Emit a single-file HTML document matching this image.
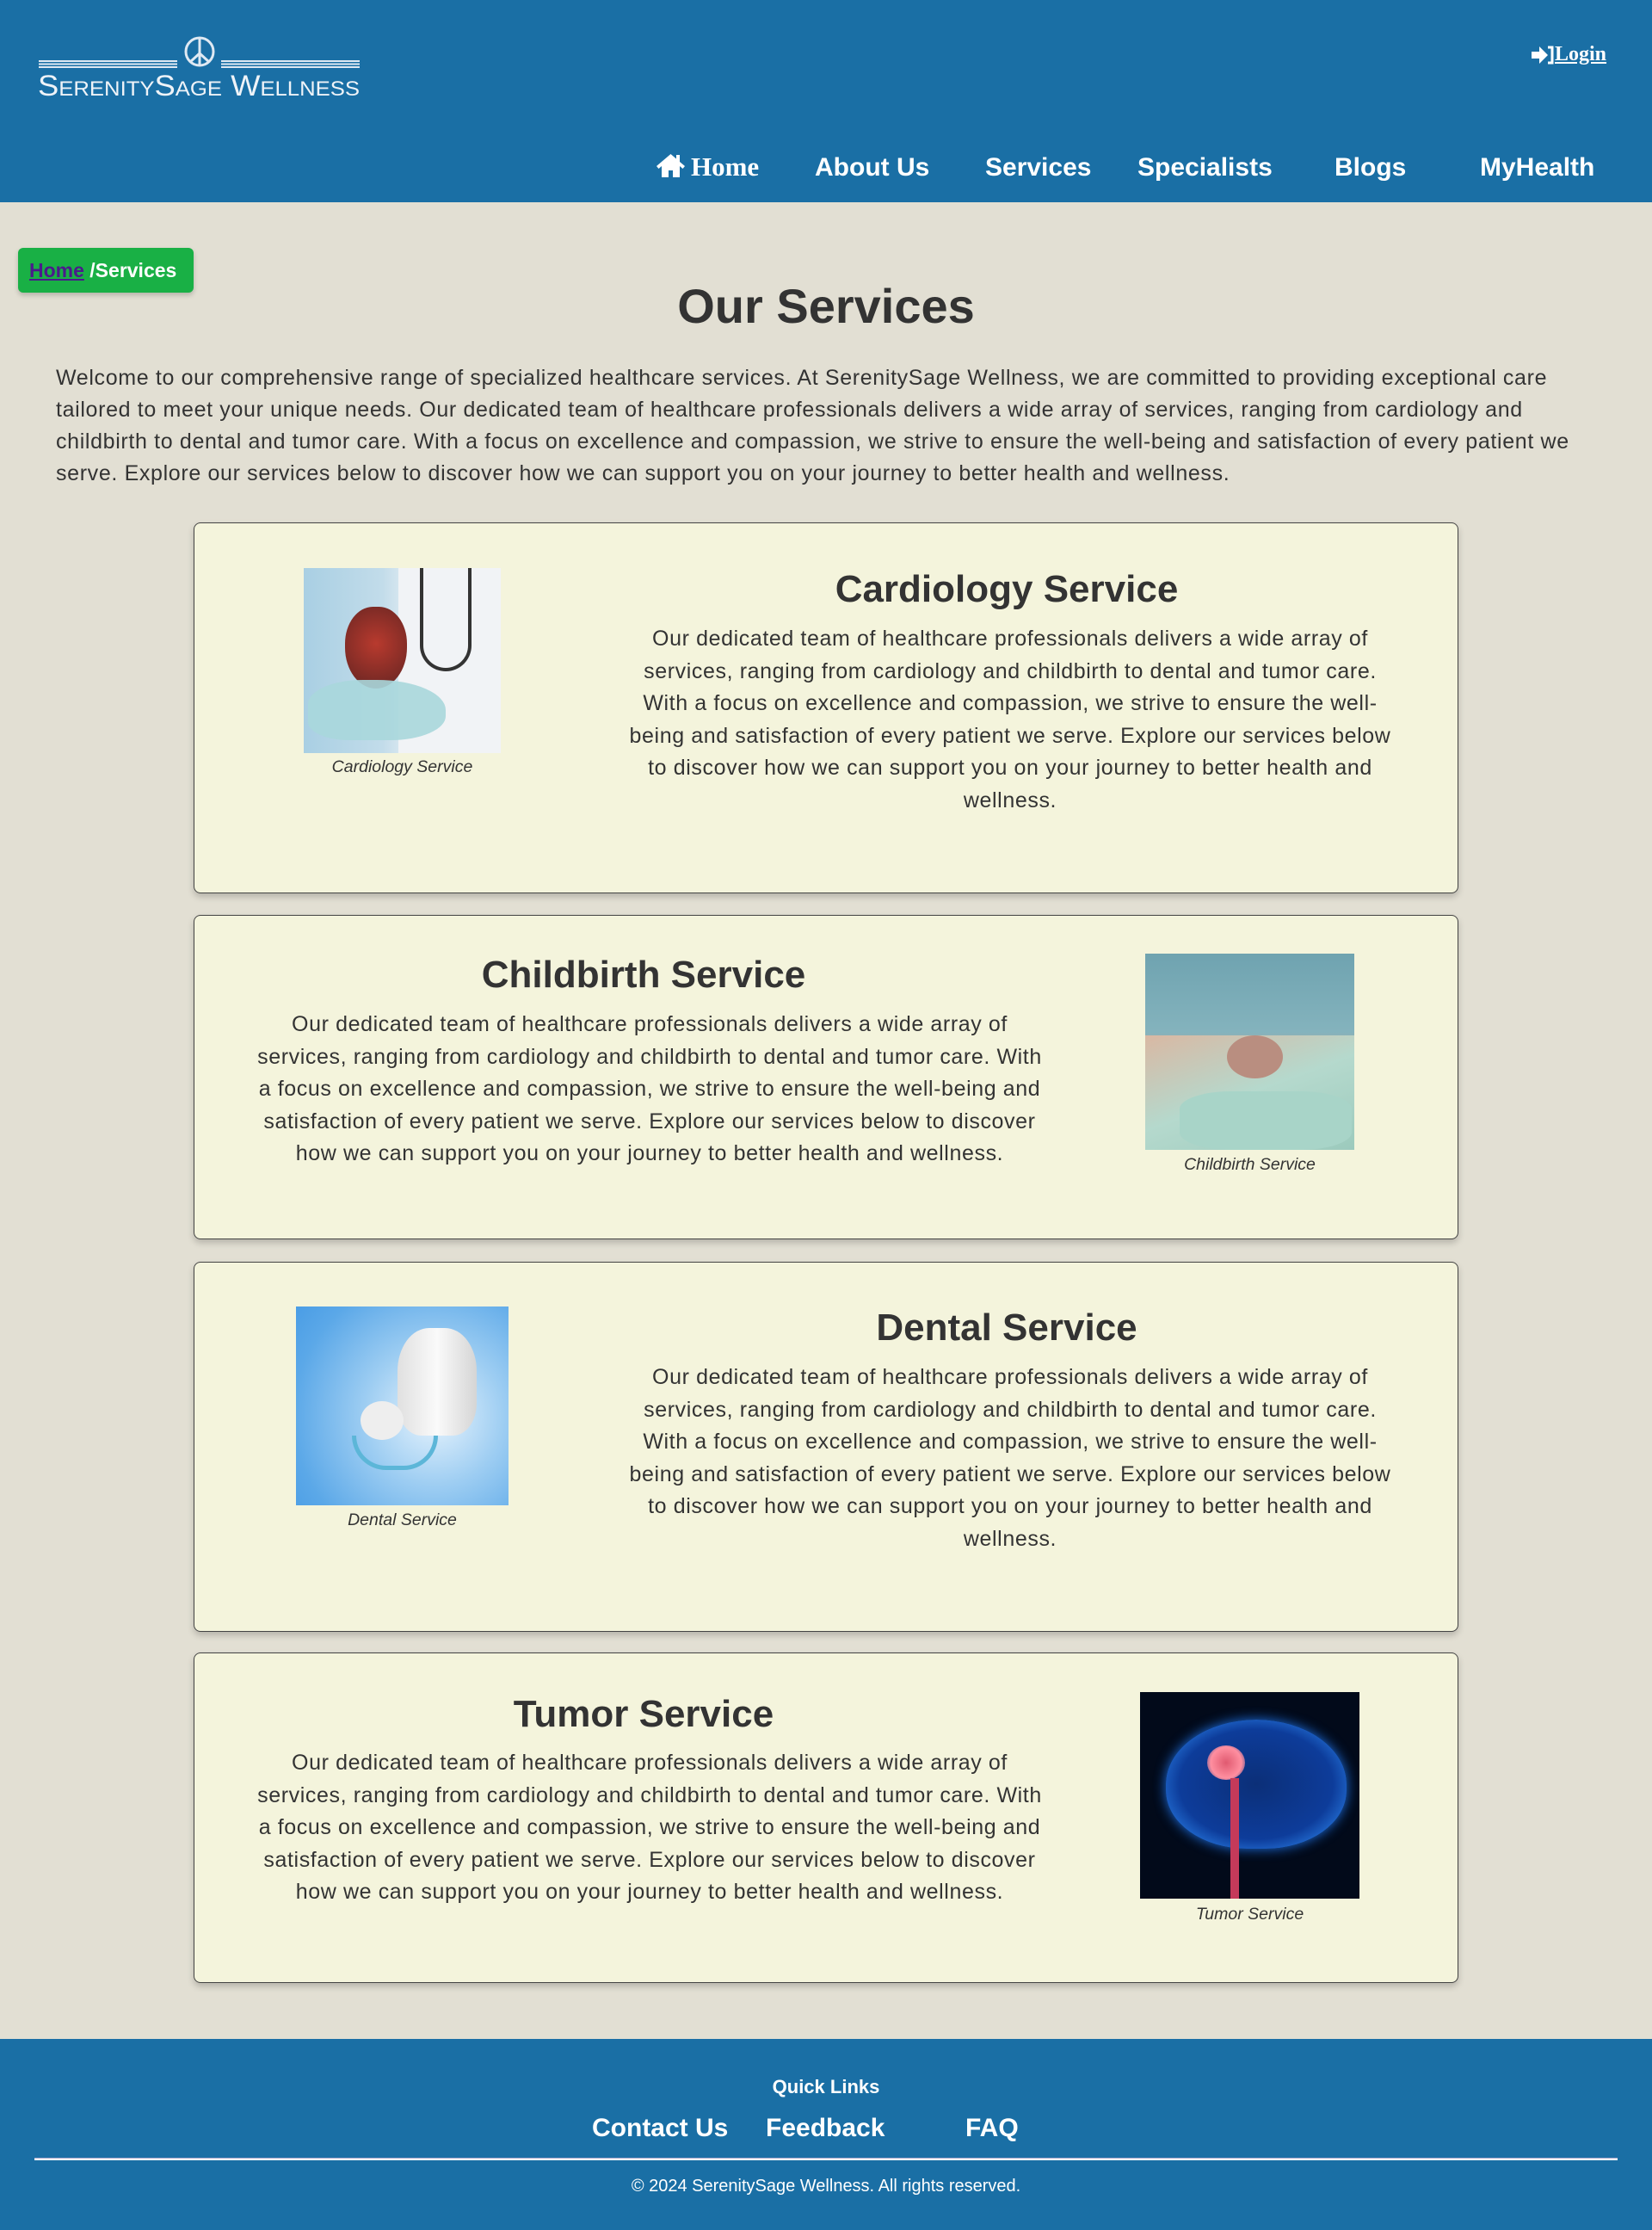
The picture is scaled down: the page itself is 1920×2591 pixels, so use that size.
<!DOCTYPE html>
<html><head><meta charset="utf-8"><style>
*{margin:0;padding:0;box-sizing:border-box}
body{width:1920px;height:2591px;background:#e2dfd3;font-family:"Liberation Sans",sans-serif;color:#333;position:relative;overflow:hidden}
.abs{position:absolute}
header{position:absolute;left:0;top:0;width:1920px;height:235px;background:#1a6fa5}
.nav{position:absolute;top:178px;color:#fff;font-weight:bold;font-size:30px;white-space:nowrap}
.card{position:absolute;left:225px;width:1470px;background:#f4f4dc;border:1.5px solid #444;border-radius:8px;box-shadow:0 4px 8px rgba(0,0,0,.2)}
.t{position:absolute;text-align:center;font-size:25px;line-height:37.5px;letter-spacing:.6px}
.h{position:absolute;text-align:center;font-size:44px;font-weight:bold;white-space:nowrap}
.cap{position:absolute;text-align:center;font-size:19.5px;font-style:italic;white-space:nowrap}
.img{position:absolute;overflow:hidden}
.fl{position:absolute;top:2456px;color:#fff;font-weight:bold;font-size:30px}
</style></head><body>
<header>
<svg class="abs" style="left:43px;top:40px" width="380" height="75" viewBox="0 0 380 75">
<g stroke="#dfe9f3" fill="none" stroke-width="2">
<line x1="2" y1="31" x2="163" y2="31"/><line x1="2" y1="34.5" x2="163" y2="34.5"/><line x1="2" y1="38" x2="163" y2="38"/>
<line x1="214" y1="31" x2="375" y2="31"/><line x1="214" y1="34.5" x2="375" y2="34.5"/><line x1="214" y1="38" x2="375" y2="38"/>
<circle cx="189" cy="20" r="16" stroke-width="3"/><line x1="189" y1="4" x2="189" y2="36" stroke-width="3"/>
<line x1="189" y1="22" x2="178" y2="32" stroke-width="3"/><line x1="189" y1="22" x2="200" y2="32" stroke-width="3"/>
</g>
<text x="188" y="71" fill="#eef3f8" text-anchor="middle" font-family="Liberation Sans Narrow,Liberation Sans,sans-serif" font-size="34" textLength="374" lengthAdjust="spacingAndGlyphs" style="font-variant:small-caps">SerenitySage Wellness</text>
</svg>
<svg class="abs" style="left:1780px;top:52px" width="28" height="24" viewBox="0 0 28 24"><path d="M0 8h9V2l10 10-10 10v-6H0z" fill="#fff"/><path d="M19 3h5v18h-5" stroke="#fff" stroke-width="3" fill="none"/></svg>
<div class="abs" style="left:1807px;top:50px;color:#fff;font-family:'Liberation Serif',serif;font-weight:bold;font-size:24px;text-decoration:underline">Login</div>
<svg class="abs" style="left:762px;top:178px" width="35" height="28" viewBox="0 0 35 28"><path d="M17.5 1L1 15l2.5 3 3.5-3v13h8v-8h5v8h8V15l3.5 3L34 15l-6-5V2h-4v4.5z" fill="#fff"/></svg>
<div class="nav" style="left:803px;top:176px;font-family:'Liberation Serif',serif;font-size:31px">Home</div>
<div class="nav" style="left:947px">About Us</div>
<div class="nav" style="left:1145px">Services</div>
<div class="nav" style="left:1322px">Specialists</div>
<div class="nav" style="left:1551px">Blogs</div>
<div class="nav" style="left:1720px">MyHealth</div>
</header>

<div class="abs" style="left:21px;top:288px;width:204px;height:52px;background:#19b045;border-radius:6px;box-shadow:0 3px 6px rgba(0,0,0,.2)"></div>
<div class="abs" style="left:34px;top:301px;font-size:23px;font-weight:bold;color:#fff;white-space:nowrap"><span style="color:#4b1a8c;text-decoration:underline">Home</span> /Services</div>

<div class="abs" style="left:0;width:1920px;top:323px;text-align:center;font-size:56px;font-weight:bold">Our Services</div>
<div class="abs" style="left:65px;top:421px;width:1795px;font-size:25px;line-height:37px;letter-spacing:.65px">Welcome to our comprehensive range of specialized healthcare services. At SerenitySage Wellness, we are committed to providing exceptional care tailored to meet your unique needs. Our dedicated team of healthcare professionals delivers a wide array of services, ranging from cardiology and childbirth to dental and tumor care. With a focus on excellence and compassion, we strive to ensure the well-being and satisfaction of every patient we serve. Explore our services below to discover how we can support you on your journey to better health and wellness.</div>

<!-- card 1 -->
<div class="card" style="top:607px;height:431px"></div>
<div class="img" style="left:353px;top:660px;width:229px;height:215px;background:linear-gradient(90deg,#a9cfe3 0%,#c2dcea 40%,#eef2f5 60%,#f7f8fa 100%)">
<div class="abs" style="left:110px;top:0;width:119px;height:215px;background:#f1f3f6"></div>
<div class="abs" style="left:135px;top:0;width:60px;height:120px;border:4px solid #333;border-top:none;border-radius:0 0 30px 30px"></div>
<div class="abs" style="left:48px;top:45px;width:72px;height:95px;background:radial-gradient(circle at 50% 45%,#b83a2e,#7a2a25 70%,#5a3535);border-radius:45% 45% 50% 50%"></div>
<div class="abs" style="left:5px;top:130px;width:160px;height:70px;background:#a9d7dc;border-radius:40% 50% 40% 30%;opacity:.9"></div>
</div>
<div class="cap" style="left:353px;width:229px;top:880px">Cardiology Service</div>
<div class="h" style="left:732px;width:876px;top:660px">Cardiology Service</div>
<div class="t" style="left:725px;width:898px;top:724px">Our dedicated team of healthcare professionals delivers a wide array of services, ranging from cardiology and childbirth to dental and tumor care. With a focus on excellence and compassion, we strive to ensure the well-being and satisfaction of every patient we serve. Explore our services below to discover how we can support you on your journey to better health and wellness.</div>

<!-- card 2 -->
<div class="card" style="top:1063px;height:377px"></div>
<div class="h" style="left:290px;width:916px;top:1108px">Childbirth Service</div>
<div class="t" style="left:290px;width:930px;top:1172px">Our dedicated team of healthcare professionals delivers a wide array of services, ranging from cardiology and childbirth to dental and tumor care. With a focus on excellence and compassion, we strive to ensure the well-being and satisfaction of every patient we serve. Explore our services below to discover how we can support you on your journey to better health and wellness.</div>
<div class="img" style="left:1331px;top:1108px;width:243px;height:228px;background:linear-gradient(180deg,#6fa3b0 0%,#84b3bd 40%,#c0a894 55%,#a5cfc4 70%,#9fcbbf 100%)">
<div class="abs" style="left:0;top:95px;width:243px;height:133px;background:linear-gradient(160deg,#d9b8a3,#b5d9cd 50%,#9ccabd)"></div>
<div class="abs" style="left:95px;top:95px;width:65px;height:50px;background:#b98e80;border-radius:50%"></div>
<div class="abs" style="left:40px;top:160px;width:200px;height:68px;background:#a8d4c8;border-radius:30%"></div>
</div>
<div class="cap" style="left:1331px;width:243px;top:1342px">Childbirth Service</div>

<!-- card 3 -->
<div class="card" style="top:1466px;height:430px"></div>
<div class="img" style="left:344px;top:1518px;width:247px;height:231px;background:radial-gradient(circle at 65% 55%,#e8f4fd 0%,#9dcdf2 40%,#5ba8e8 80%,#4a9de5 100%)">
<div class="abs" style="left:118px;top:25px;width:92px;height:125px;background:linear-gradient(90deg,#e0e0e0,#fafafa 50%,#d5d5d5);border-radius:40% 40% 30% 30%"></div>
<div class="abs" style="left:75px;top:110px;width:50px;height:45px;background:#eee;border-radius:50%"></div>
<div class="abs" style="left:65px;top:150px;width:100px;height:40px;border:5px solid #5cb6d8;border-top:none;border-radius:0 0 40px 40px"></div>
</div>
<div class="cap" style="left:344px;width:247px;top:1755px">Dental Service</div>
<div class="h" style="left:732px;width:876px;top:1518px">Dental Service</div>
<div class="t" style="left:725px;width:898px;top:1582px">Our dedicated team of healthcare professionals delivers a wide array of services, ranging from cardiology and childbirth to dental and tumor care. With a focus on excellence and compassion, we strive to ensure the well-being and satisfaction of every patient we serve. Explore our services below to discover how we can support you on your journey to better health and wellness.</div>

<!-- card 4 -->
<div class="card" style="top:1920px;height:384px"></div>
<div class="h" style="left:290px;width:916px;top:1967px">Tumor Service</div>
<div class="t" style="left:290px;width:930px;top:2030px">Our dedicated team of healthcare professionals delivers a wide array of services, ranging from cardiology and childbirth to dental and tumor care. With a focus on excellence and compassion, we strive to ensure the well-being and satisfaction of every patient we serve. Explore our services below to discover how we can support you on your journey to better health and wellness.</div>
<div class="img" style="left:1325px;top:1966px;width:255px;height:240px;background:#020a1a">
<div class="abs" style="left:30px;top:32px;width:210px;height:150px;border-radius:50% 50% 45% 45%;background:radial-gradient(ellipse at 50% 50%,#0c2f78 0%,#0d3c9a 60%,#2a7fe6 85%,#0a1c3c 100%);box-shadow:0 0 14px #1d6fe0"></div>
<div class="abs" style="left:78px;top:62px;width:44px;height:40px;border-radius:50%;background:radial-gradient(circle,#e05a70,#ff8fa0 60%,rgba(230,60,90,0) 100%)"></div>
<div class="abs" style="left:105px;top:100px;width:10px;height:140px;background:#c53a5a"></div>
</div>
<div class="cap" style="left:1325px;width:255px;top:2213px">Tumor Service</div>

<!-- footer -->
<div class="abs" style="left:0;top:2369px;width:1920px;height:222px;background:#1a6fa5"></div>
<div class="abs" style="left:0;width:1920px;top:2412px;text-align:center;color:#fff;font-weight:bold;font-size:22px">Quick Links</div>
<div class="fl" style="left:688px">Contact Us</div>
<div class="fl" style="left:890px">Feedback</div>
<div class="fl" style="left:1122px">FAQ</div>
<div class="abs" style="left:40px;top:2508px;width:1840px;height:2px;background:#fff;box-shadow:0 -1px 0 #aac"></div>
<div class="abs" style="left:0;width:1920px;top:2529px;text-align:center;color:#fff;font-size:20px">© 2024 SerenitySage Wellness. All rights reserved.</div>
</body></html>
